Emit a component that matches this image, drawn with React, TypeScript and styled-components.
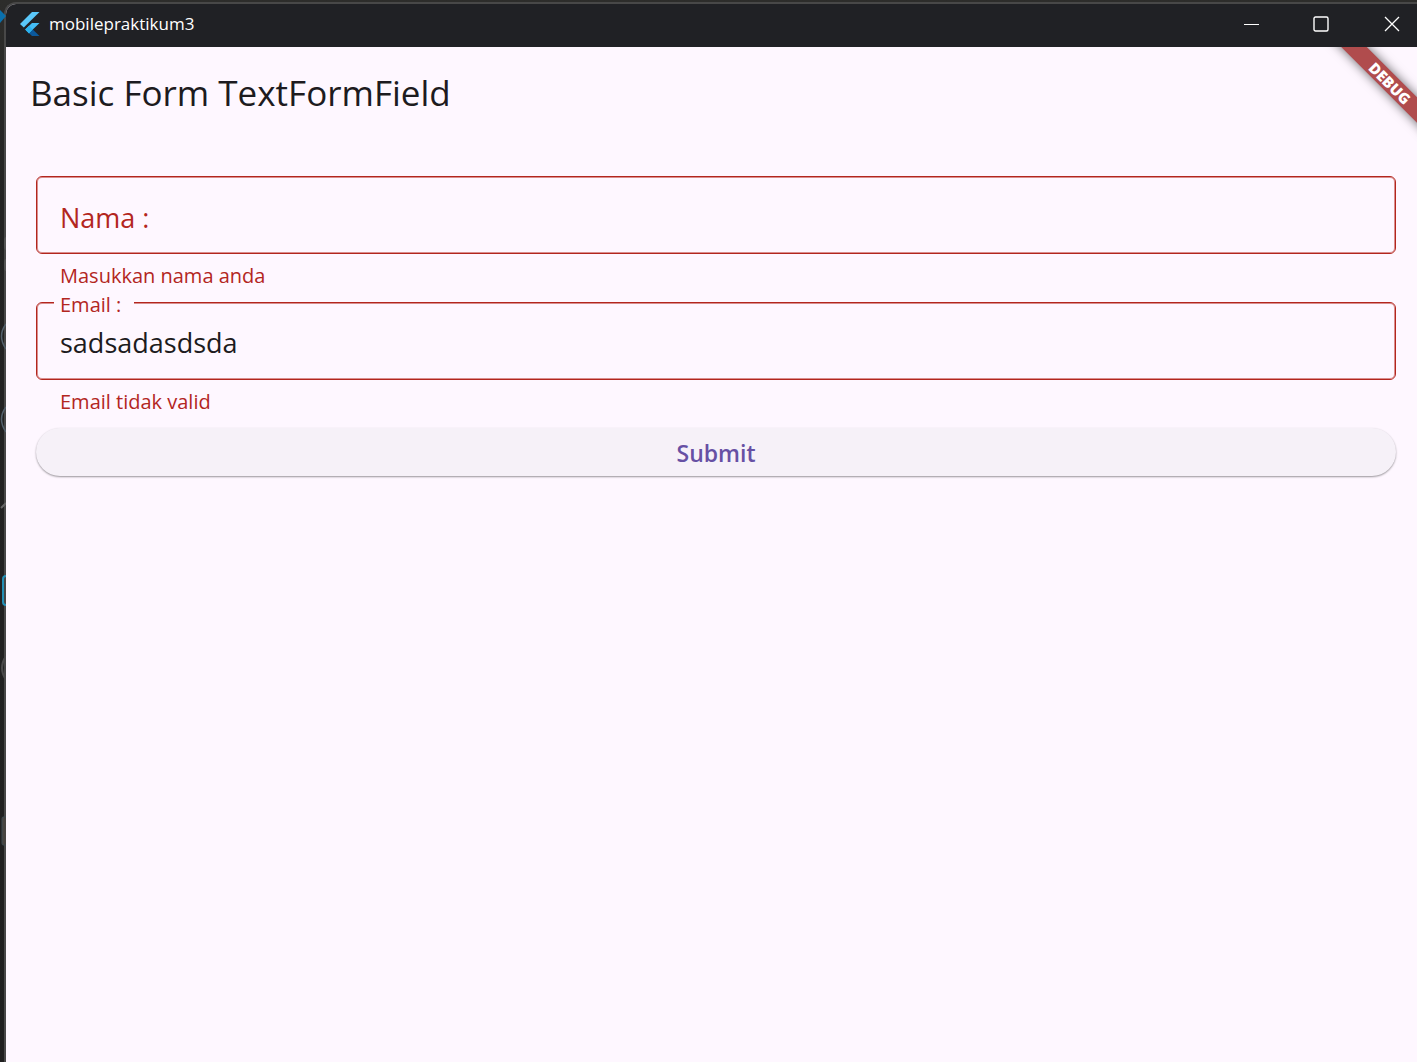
import React, { useId, useState } from "react";
import styled, { createGlobalStyle } from "styled-components";

const error = "#b3261e";
const surface = "#fef7ff";

const GlobalStyle = createGlobalStyle`
  *, *::before, *::after { box-sizing: border-box; }
  body {
    margin: 0;
    background: #232323;
    font-family: "Open Sans", "Noto Sans", sans-serif;
  }
`;

const Desktop = styled.div`
  position: relative;
  display: flex;
  min-height: 100vh;
  padding: 2px 0 0 4px;
  overflow: hidden;
  background: linear-gradient(#2d2d2b, #232323 200px, #1f1f1f);
`;

const Backdrop = styled.svg`
  position: absolute;
  top: 0;
  left: 0;
`;

const Window = styled.div`
  position: relative;
  display: flex;
  flex: 1;
  flex-direction: column;
  border: solid #484848;
  border-width: 2px 0 0 2px;
  border-radius: 12px 0 0 0;
  background: ${surface};
  overflow: hidden;
`;

const TitleBar = styled.header`
  display: flex;
  align-items: center;
  justify-content: space-between;
  height: 43px;
  padding: 0 0 3px 14px;
  background: #202125;
  color: #ffffff;
`;

const AppName = styled.div`
  display: flex;
  align-items: center;
  gap: 9px;
  font-size: 17px;
  line-height: 24px;
`;

const WindowControls = styled.div`
  display: flex;
  height: 100%;
  margin-right: -10px;
`;

const ControlButton = styled.button<{ $width: number }>`
  display: grid;
  place-items: center;
  width: ${(p) => p.$width}px;
  padding: 0;
  border: 0;
  background: transparent;
  color: inherit;
`;

const Page = styled.main`
  position: relative;
  flex: 1;
`;

const AppBar = styled.div`
  display: flex;
  align-items: center;
  height: 92px;
  padding: 0 24px;
`;

const PageTitle = styled.h1`
  margin: 0;
  color: #1d1b20;
  font-size: 35px;
  font-weight: 400;
  line-height: 48px;
`;

const Form = styled.form`
  display: flex;
  flex-direction: column;
  padding: 37px 21px 30px 30px;
`;

const FieldBox = styled.div`
  position: relative;
  height: 78px;
  border: 1px solid ${error};
  border-radius: 6px;
  box-shadow: inset 0 0 0 1px rgba(179, 38, 30, 0.5);
`;

const FieldLabel = styled.label<{ $floating: boolean }>`
  position: absolute;
  top: ${(p) => (p.$floating ? "-12px" : "23px")};
  left: 17px;
  padding: 0 13px 0 6px;
  background: ${surface};
  color: ${error};
  font-size: ${(p) => (p.$floating ? 20 : 27)}px;
  line-height: ${(p) => (p.$floating ? 28 : 36)}px;
  pointer-events: none;
`;

const TextInput = styled.input`
  display: block;
  width: 100%;
  height: 100%;
  padding: 2px 23px 0;
  border: 0;
  border-radius: 6px;
  outline: 0;
  background: transparent;
  color: #1d1b20;
  font-family: inherit;
  font-size: 27px;
  line-height: 36px;
`;

const ErrorText = styled.p`
  height: 48px;
  margin: 0;
  padding: 8px 24px 0;
  color: ${error};
  font-size: 20px;
  line-height: 28px;
`;

const SubmitButton = styled.button`
  height: 48px;
  padding: 2px 24px 0;
  border: 0;
  border-radius: 24px;
  background: #f6f1f8;
  box-shadow: 0 1px 2px rgba(0, 0, 0, 0.4);
  color: #6750a4;
  font-family: inherit;
  font-size: 23px;
  font-weight: 600;
  line-height: 32px;
`;

const BannerCorner = styled.div`
  position: absolute;
  top: 0;
  right: 0;
  width: 110px;
  height: 110px;
  overflow: hidden;
  pointer-events: none;
`;

const Banner = styled.div`
  position: absolute;
  top: 27px;
  right: -53px;
  width: 160px;
  height: 18px;
  transform: rotate(45deg);
  background: #b04c4d;
  box-shadow: 0 0 11px rgba(0, 0, 0, 0.6);
  color: #ffffff;
  font-family: "Open Sans", sans-serif;
  font-size: 15px;
  font-weight: 800;
  line-height: 18px;
  text-align: center;
`;

function FlutterLogo() {
  return (
    <svg width="20" height="24" viewBox="0 0 20 24" aria-hidden="true">
      <path d="M12 0h7.500L3.800 15.600 0 12z" fill="#5ac8fa" />
      <path d="M12 11h7.500l-6.700 6.600-3.800 3.800L5.200 17.600z" fill="#44bdf4" />
      <path d="M9 21.300l3.800-3.800 6.700 6.500H12z" fill="#0b599d" />
      <path d="M5.200 17.600 9 13.800l3.800 3.800L9 21.300z" fill="#29b1ee" />
    </svg>
  );
}

function BehindWindow() {
  return (
    <Backdrop width="6" height="900" fill="none" aria-hidden="true">
      <path d="M0 10l6 6-6 7z" fill="#0a70ad" />
      <path d="M6 237q-2 0-2 4v5q0 4 2 4M6 259q-2 0-2 4v4q0 4 2 4" fill="#555" />
      <path d="M6 324q-9 12 0 25M6 407q-9 12 0 25" stroke="#53616c" strokeWidth="1.500" />
      <path d="M1 508l5-5" stroke="#666" strokeWidth="2" />
      <path d="M6 576q-3 0-3 3v23q0 3 3 3" stroke="#238fb5" strokeWidth="2" />
      <path d="M6 656q-8 12 0 24" stroke="#4b4b4b" strokeWidth="2" />
      <path d="M6 817H3q-1 0-1 2v24q0 2 1 2h3" fill="#484541" stroke="#3d4a51" />
    </Backdrop>
  );
}

interface FieldProps {
  label: string;
  message: string;
  initialValue?: string;
}

function FormField({ label, message, initialValue = "" }: FieldProps) {
  const id = useId();
  const [value, setValue] = useState(initialValue);
  return (
    <>
      <FieldBox>
        <TextInput
          id={id}
          value={value}
          spellCheck={false}
          aria-invalid="true"
          aria-describedby={`${id}-error`}
          onChange={(e) => setValue(e.target.value)}
        />
        <FieldLabel htmlFor={id} $floating={value !== ""}>
          {label}
        </FieldLabel>
      </FieldBox>
      <ErrorText id={`${id}-error`}>{message}</ErrorText>
    </>
  );
}

export default function App() {
  return (
    <>
      <GlobalStyle />
      <Desktop>
        <Window>
          <TitleBar>
            <AppName>
              <FlutterLogo />
              <span>mobilepraktikum3</span>
            </AppName>
            <WindowControls>
              <ControlButton type="button" aria-label="Minimize" $width={68}>
                <svg width="16" height="16" stroke="currentColor">
                  <path d="M0 8.500h15" />
                </svg>
              </ControlButton>
              <ControlButton type="button" aria-label="Maximize" $width={70}>
                <svg width="16" height="16" fill="none" stroke="currentColor" strokeWidth="1.400">
                  <rect x="1" y="1" width="14" height="14" rx="1.500" />
                </svg>
              </ControlButton>
              <ControlButton type="button" aria-label="Close" $width={71}>
                <svg width="16" height="16" stroke="currentColor" strokeWidth="1.300">
                  <path d="M1 1l14 14M15 1L1 15" />
                </svg>
              </ControlButton>
            </WindowControls>
          </TitleBar>
          <Page>
            <AppBar>
              <PageTitle>Basic Form TextFormField</PageTitle>
            </AppBar>
            <Form noValidate onSubmit={(e) => e.preventDefault()}>
              <FormField label="Nama :" message="Masukkan nama anda" />
              <FormField label="Email :" message="Email tidak valid" initialValue="sadsadasdsda" />
              <SubmitButton type="submit">Submit</SubmitButton>
            </Form>
            <BannerCorner>
              <Banner>DEBUG</Banner>
            </BannerCorner>
          </Page>
        </Window>
        <BehindWindow />
      </Desktop>
    </>
  );
}
